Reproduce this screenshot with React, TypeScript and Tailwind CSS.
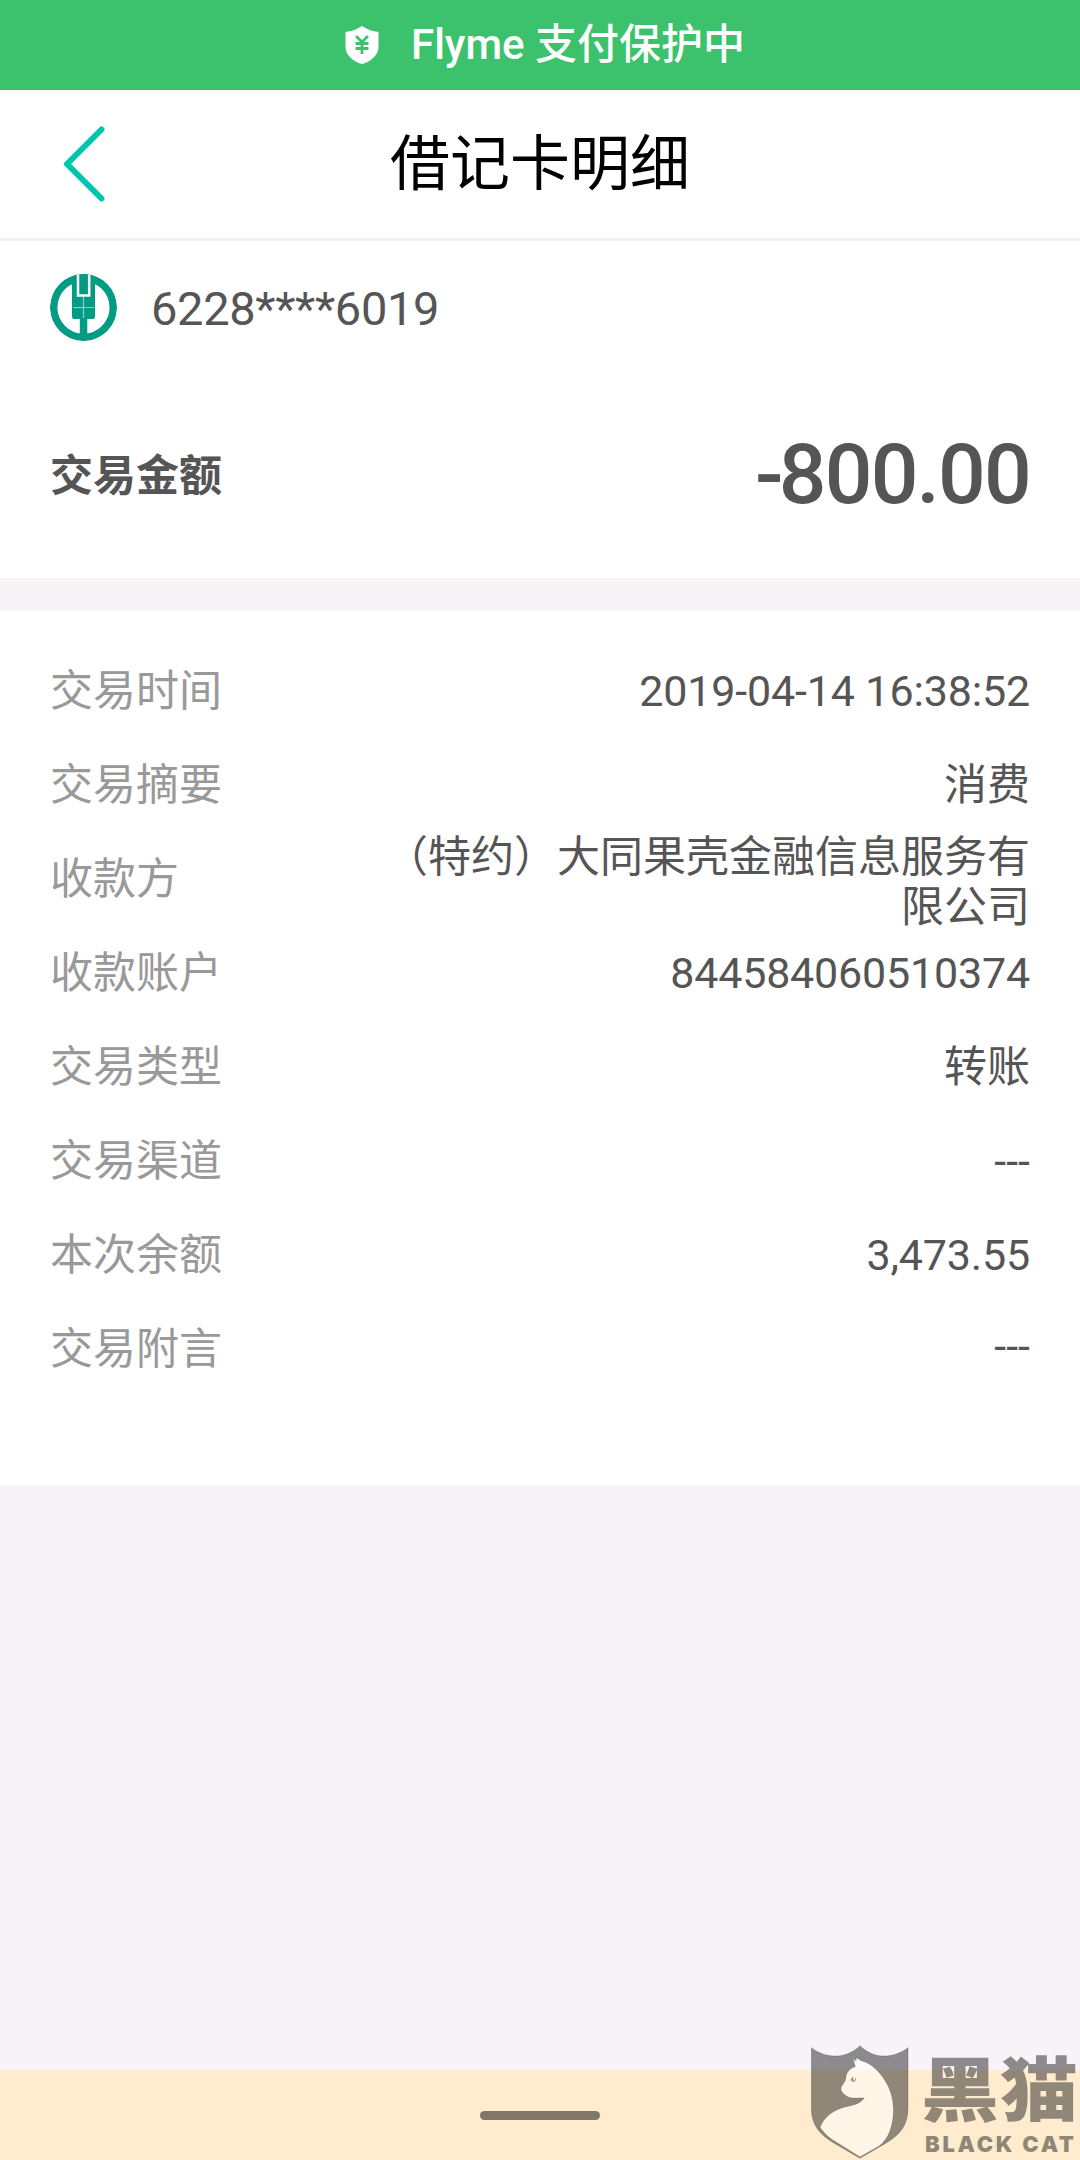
import clsx from 'clsx';

interface DetailRow {
  label: string;
  value: string;
  className?: string;
}

const rows: DetailRow[] = [
  { label: '交易时间', value: '2019-04-14 16:38:52', className: 'tracking-[-0.15px]' },
  { label: '交易摘要', value: '消费' },
  { label: '收款方', value: '（特约）大同果壳金融信息服务有限公司', className: 'pt-[6px]' },
  { label: '收款账户', value: '844584060510374', className: 'tracking-[-0.18px]' },
  { label: '交易类型', value: '转账' },
  { label: '交易渠道', value: '---' },
  { label: '本次余额', value: '3,473.55', className: 'tracking-[-0.15px]' },
  { label: '交易附言', value: '---', className: 'pb-[7px]' },
];

function ShieldIcon() {
  return (
    <svg width="34" height="38" viewBox="0 0 34 38" className="shrink-0">
      <path d="M17 0 C22 3.500 28 5.500 33.500 6 V21 C33.500 29 26 35.500 17 38 C8 35.500 .5 29 .5 21 V6 C6 5.500 12 3.500 17 0Z" fill="#fff" />
      <path d="M11 10 L17 16 L23 10 M10.500 17.500 H23.500 M10.500 22.500 H23.500 M17 16 V28" fill="none" stroke="#3cc26c" strokeWidth="2.800" />
    </svg>
  );
}

function BankLogo() {
  return (
    <svg width="67" height="67" viewBox="0 0 67 67" className="shrink-0">
      <clipPath id="logo-disc">
        <circle cx="33.500" cy="33.500" r="33.500" />
      </clipPath>
      <g clipPath="url(#logo-disc)">
        <circle cx="33.500" cy="33.500" r="29.800" fill="none" stroke="#049b85" strokeWidth="7.500" />
        <path d="M22 0 H45 V43 L44 45 H37.300 V62 H29.800 V45 H23 L22 43Z" fill="#049b85" />
        <path d="M28 0 V21.500 H39.200 V0" fill="none" stroke="#fff" strokeWidth="2.500" />
        <path d="M33.500 23 V44 M23 33.500 H44.500" fill="none" stroke="#8fd0c6" strokeWidth="1.200" />
      </g>
    </svg>
  );
}

function Watermark() {
  return (
    <div className="absolute right-0 bottom-0 flex h-[116px] w-[269px] gap-[15px]">
      <svg width="98" height="116" viewBox="18 12 294 348" className="shrink-0">
        <path
          d="M19 23 C65 58 125 57 165 17 C205 57 263 58 309 23 V205 C309 255 285 285 245 308 L165 355 L85 308 C45 285 19 255 19 205Z M145 55 L153 64 L155 53 L167 62 C195 66 230 98 250 140 C270 185 268 232 256 268 C248 292 236 308 222 318 L165 350 L84 300 C65 288 53 274 46 262 C58 228 88 210 122 201 C150 195 168 190 178 174 C158 172 145 177 132 172 C122 166 108 158 108 144 C112 134 122 128 123 112 C124 98 134 86 151 80L145 55Z"
          fill="#2e2d2d"
          fillOpacity=".53"
          fillRule="evenodd"
          stroke="#2e2d2d"
          strokeOpacity=".25"
          strokeWidth="3"
        />
        <path
          d="M145 55 L153 64 L155 53 L167 62 C195 66 230 98 250 140 C270 185 268 232 256 268 C248 292 236 308 222 318 L165 350 L84 300 C65 288 53 274 46 262 C58 228 88 210 122 201 C150 195 168 190 178 174 C158 172 145 177 132 172 C122 166 108 158 108 144 C112 134 122 128 123 112 C124 98 134 86 151 80Z"
          fill="#fff"
          fillOpacity=".55"
        />
        <path d="M137 124 C137 116 141 112 146 111 L144 118 L148 124 L153 112 C155 119 150 126 145 127 L140 121Z" fill="#2e2d2d" fillOpacity=".55" />
      </svg>
      <div className="flex w-[156px] flex-col text-[#2e2d2d]/53">
        <span className="mt-[6px] ml-[-3px] h-[78px] origin-top scale-y-[0.9] whitespace-nowrap font-['Noto_Sans_CJK_SC',sans-serif] text-[78px] leading-[78px] font-black tracking-[1px]">黑猫</span>
        <span className="mt-[4px] ml-[1px] whitespace-nowrap font-[Inter,sans-serif] text-[22px] leading-[24px] font-black tracking-[2.7px]">BLACK CAT</span>
      </div>
    </div>
  );
}

export default function App() {
  return (
    <div className="relative flex h-[2160px] w-[1080px] flex-col overflow-hidden bg-[#f7f3f7] font-[Roboto,'Noto_Sans_CJK_SC',sans-serif] text-[#555]">
      <div className="flex h-[90px] items-center justify-center gap-[32px] bg-[#3cc26c] pl-[10px] text-white">
        <ShieldIcon />
        <span className="text-[42px] leading-none font-medium">Flyme 支付保护中</span>
      </div>

      <header className="grid h-[151px] grid-cols-[1fr_auto_1fr] items-center border-b-[3px] border-[#f0f0f0] bg-white">
        <svg width="42" height="76" viewBox="0 0 42 76" className="ml-[63px]">
          <path d="M38.500 3.500 L4 38 L38.500 72.500" fill="none" stroke="#00c6ae" strokeWidth="6" strokeLinecap="round" strokeLinejoin="round" />
        </svg>
        <h1 className="pt-[1px] text-[60px] leading-none text-black">借记卡明细</h1>
      </header>

      <section className="h-[337px] bg-white px-[50px] pt-[33px]">
        <div className="flex h-[67px] items-center gap-[34px]">
          <BankLogo />
          <span className="pt-[1px] text-[47px] leading-none tracking-[-0.35px]">6228****6019</span>
        </div>
        <div className="mt-[92px] flex h-[84px] items-center justify-between">
          <span className="pt-[3px] text-[43px] leading-none font-bold">交易金额</span>
          <span className="text-[84px] leading-none font-medium tracking-[-1.8px]">
            <span className="mr-[-3px]">-</span>800.00
          </span>
        </div>
      </section>

      <section className="mt-[33px] h-[874px] bg-white px-[50px] pt-[33px]">
        {rows.map(row => (
          <div key={row.label} className="flex h-[94px] items-center justify-between text-[43px] leading-[50px]">
            <span className="text-[#999]">{row.label}</span>
            <span className={clsx('w-[660px] text-right', row.className)}>{row.value}</span>
          </div>
        ))}
      </section>

      <footer className="mt-auto flex h-[90px] items-center justify-center bg-[#ffebcd]">
        <div className="h-[9px] w-[120px] rounded-full bg-[#807766]" />
      </footer>

      <Watermark />
    </div>
  );
}
